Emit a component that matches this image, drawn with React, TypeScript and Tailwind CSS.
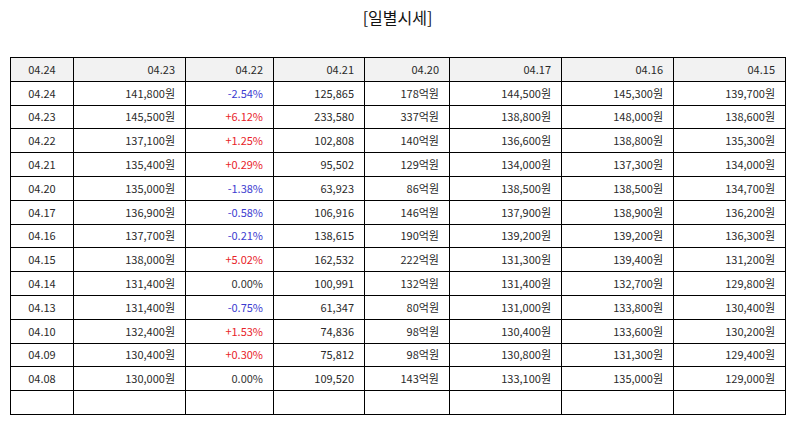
import React from 'react';

const headers = ['04.24', '04.23', '04.22', '04.21', '04.20', '04.17', '04.16', '04.15'];

const rows: string[][] = [
  ['04.24', '141,800원', '-2.54%', '125,865', '178억원', '144,500원', '145,300원', '139,700원'],
  ['04.23', '145,500원', '+6.12%', '233,580', '337억원', '138,800원', '148,000원', '138,600원'],
  ['04.22', '137,100원', '+1.25%', '102,808', '140억원', '136,600원', '138,800원', '135,300원'],
  ['04.21', '135,400원', '+0.29%', '95,502', '129억원', '134,000원', '137,300원', '134,000원'],
  ['04.20', '135,000원', '-1.38%', '63,923', '86억원', '138,500원', '138,500원', '134,700원'],
  ['04.17', '136,900원', '-0.58%', '106,916', '146억원', '137,900원', '138,900원', '136,200원'],
  ['04.16', '137,700원', '-0.21%', '138,615', '190억원', '139,200원', '139,200원', '136,300원'],
  ['04.15', '138,000원', '+5.02%', '162,532', '222억원', '131,300원', '139,400원', '131,200원'],
  ['04.14', '131,400원', '0.00%', '100,991', '132억원', '131,400원', '132,700원', '129,800원'],
  ['04.13', '131,400원', '-0.75%', '61,347', '80억원', '131,000원', '133,800원', '130,400원'],
  ['04.10', '132,400원', '+1.53%', '74,836', '98억원', '130,400원', '133,600원', '130,200원'],
  ['04.09', '130,400원', '+0.30%', '75,812', '98억원', '130,800원', '131,300원', '129,400원'],
  ['04.08', '130,000원', '0.00%', '109,520', '143억원', '133,100원', '135,000원', '129,000원'],
];

const widths = ['w-[63px]', 'w-[112px]', 'w-[88px]', 'w-[91px]', 'w-[85px]', 'w-[112px]', 'w-[112px]', 'w-[112px]'];

function changeColor(v: string) {
  if (v.startsWith('+')) return 'text-[#e8232a]';
  if (v.startsWith('-')) return 'text-[#3c3cd0]';
  return 'text-[#333]';
}

export default function App() {
  return (
    <div
      className="w-[795px] h-[425px] bg-white px-[10px] pt-[5px]"
      style={{ fontFamily: '"Noto Sans CJK KR", "Noto Sans", sans-serif' }}
    >
      <h2 className="text-center text-[16px] leading-[24px] text-[#111] mb-[28px]">[일별시세]</h2>
      <table className="w-[775px] border-collapse table-fixed text-[11px] text-[#2a2a2a]">
        <colgroup>
          {widths.map((w, i) => (
            <col key={i} className={w} />
          ))}
        </colgroup>
        <thead>
          <tr className="h-[23.8px] bg-[#f2f2f2]">
            {headers.map((h, i) => (
              <th
                key={h}
                className={`border border-black font-normal py-0 leading-none ${i === 0 ? 'text-center' : 'text-right pr-[10px]'}`}
              >
                {h}
              </th>
            ))}
          </tr>
        </thead>
        <tbody>
          {rows.map((r) => (
            <tr key={r[0]} className="h-[23.8px]">
              {r.map((c, i) => (
                <td
                  key={i}
                  className={`border border-black py-0 leading-none ${i === 0 ? 'text-center' : 'text-right pr-[10px]'} ${i === 2 ? changeColor(c) : ''}`}
                >
                  {c}
                </td>
              ))}
            </tr>
          ))}
          <tr className="h-[23.8px]">
            {headers.map((h) => (
              <td key={h} className="border border-black" />
            ))}
          </tr>
        </tbody>
      </table>
    </div>
  );
}
